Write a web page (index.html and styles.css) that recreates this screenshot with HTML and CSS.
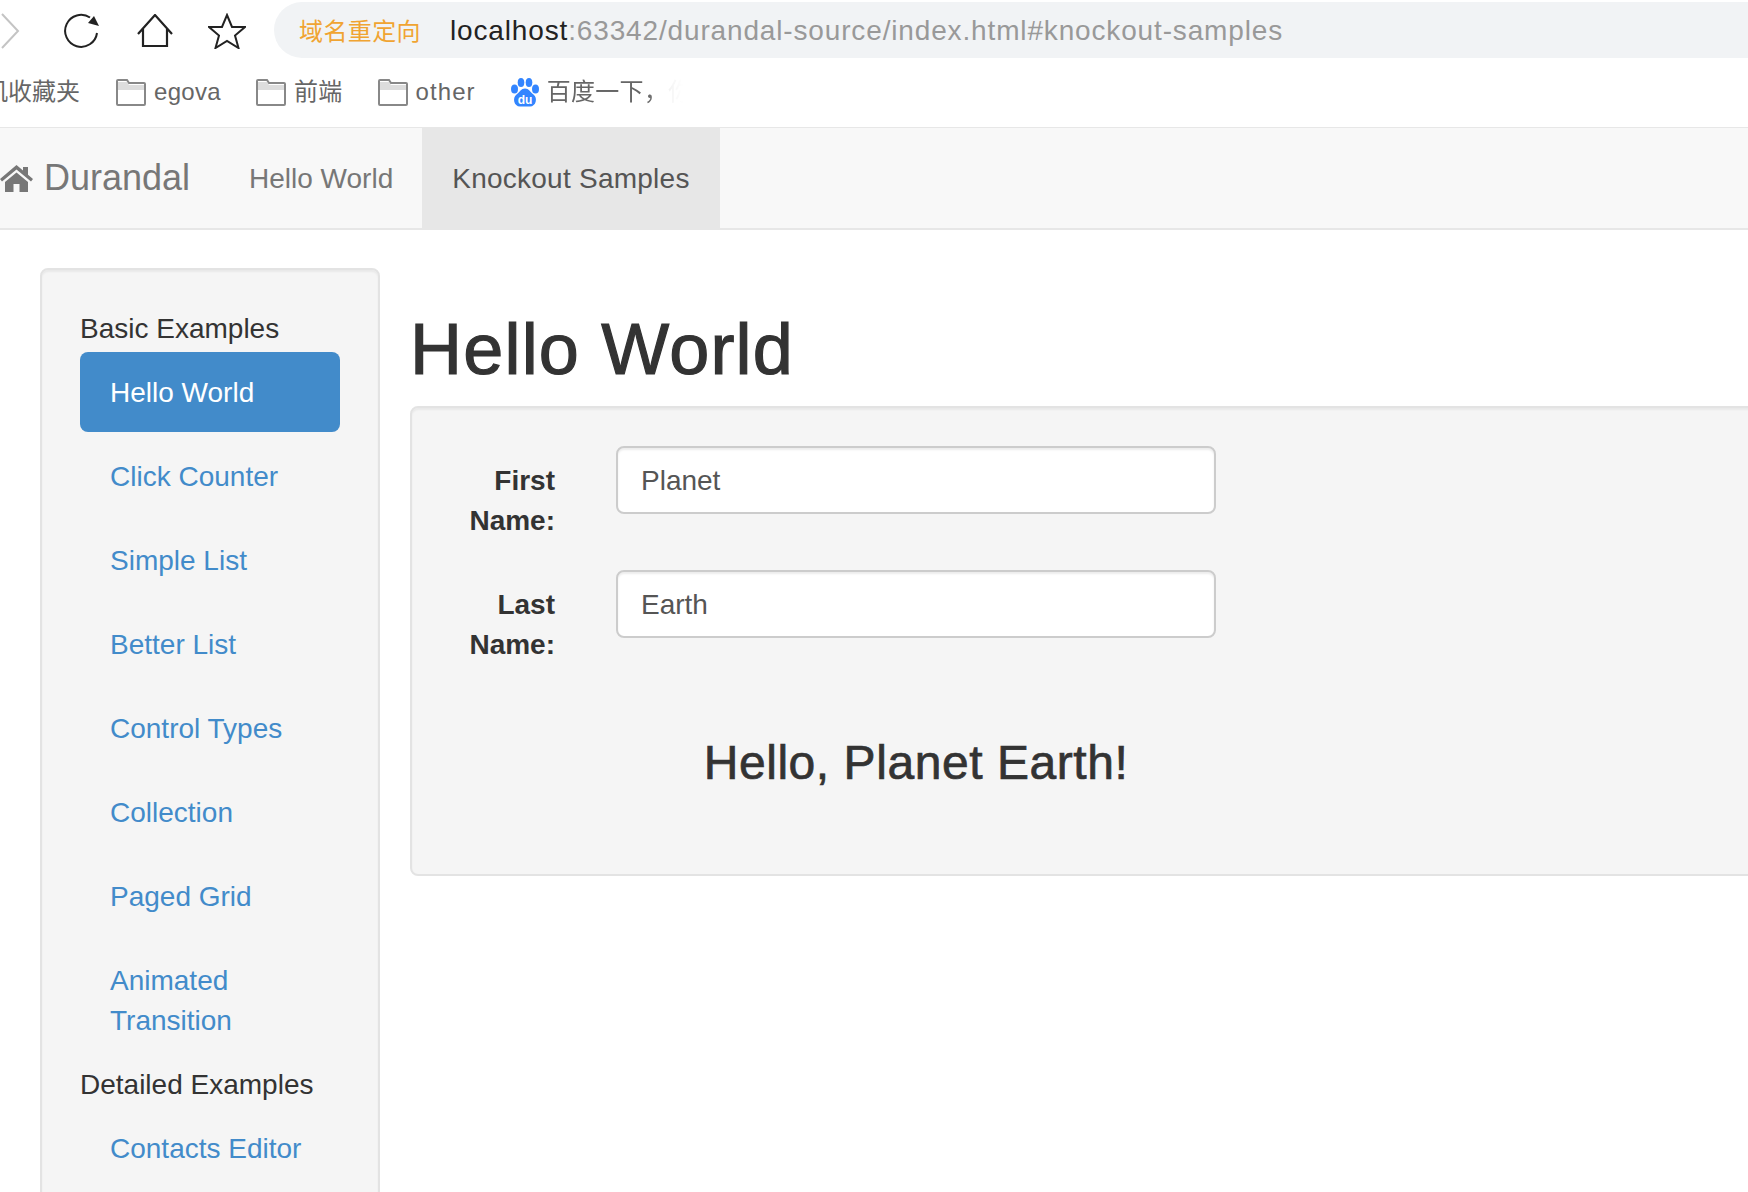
FILE: index.html
```html
<!DOCTYPE html>
<html lang="en-US">

<head>
    <title>Durandal</title>
    <meta charset="utf-8">
    <link rel="stylesheet" href="styles.css">
</head>

<body>
    <div class="toolbar">
        <div class="toolbar-icons">
            <svg class="icon-forward" width="20" height="36" viewBox="0 0 20 36"><path d="M2 1l16 17L2 35" fill="none" stroke="#c4c4c4" stroke-width="2"/></svg>
            <svg class="icon-reload" width="38" height="38" viewBox="0 0 38 38"><path d="M28 5.500A16 16 0 1 0 35 21" fill="none" stroke="#222" stroke-width="2"/><path d="M32 4l5 10-11-3z" fill="#222"/></svg>
            <svg class="icon-home" width="36" height="34" viewBox="0 0 36 34"><path d="M1 20L18 1l17 19M6 15v17h24V15" fill="none" stroke="#222" stroke-width="2.200"/></svg>
            <svg class="icon-star" width="38" height="36" viewBox="0 0 38 36"><path d="M19 2l5 12h13l-10 8.500 3.500 12.500L19 28 7.500 35 11 22.500 1 14h13z" fill="none" stroke="#222" stroke-width="2"/></svg>
        </div>
        <div class="urlbar">
            <span class="url-tag">域名重定向</span>
            <span class="url-host">localhost</span><span class="url-rest">:63342/durandal-source/index.html#knockout-samples</span>
        </div>
    </div>
    <div class="bookmarks">
        <span class="bookmark bookmark-first">机收藏夹</span>
        <span class="bookmark">
            <svg width="30" height="27" viewBox="0 0 30 27"><path d="M2 3h9l2 3h15v5H2z" fill="#ddd"/><path d="M1 25V2a1 1 0 0 1 1-1h9l2 3h15a1 1 0 0 1 1 1v20a1 1 0 0 1-1 1H2a1 1 0 0 1-1-1z" fill="none" stroke="#888" stroke-width="2"/></svg>
            egova
        </span>
        <span class="bookmark">
            <svg width="30" height="27" viewBox="0 0 30 27"><path d="M2 3h9l2 3h15v5H2z" fill="#ddd"/><path d="M1 25V2a1 1 0 0 1 1-1h9l2 3h15a1 1 0 0 1 1 1v20a1 1 0 0 1-1 1H2a1 1 0 0 1-1-1z" fill="none" stroke="#888" stroke-width="2"/></svg>
            前端
        </span>
        <span class="bookmark bookmark-wide">
            <svg width="30" height="27" viewBox="0 0 30 27"><path d="M2 3h9l2 3h15v5H2z" fill="#ddd"/><path d="M1 25V2a1 1 0 0 1 1-1h9l2 3h15a1 1 0 0 1 1 1v20a1 1 0 0 1-1 1H2a1 1 0 0 1-1-1z" fill="none" stroke="#888" stroke-width="2"/></svg>
            other
        </span>
        <span class="bookmark">
            <svg width="28" height="29" viewBox="0 0 28 29"><g fill="#3385ff"><ellipse cx="3.500" cy="11" rx="3.500" ry="4.500"/><ellipse cx="10" cy="4.500" rx="3.300" ry="4.500"/><ellipse cx="18" cy="4.500" rx="3.300" ry="4.500"/><ellipse cx="24.500" cy="11" rx="3.500" ry="4.500"/><path d="M14 10.500c4 0 5 3.500 8.500 6 4.500 3.500 2.500 12-3.500 12H9c-6 0-8-8.500-3.500-12 3.500-2.500 4.500-6 8.500-6z"/></g><text x="14" y="26" class="du">du</text></svg>
            <span class="bookmark-fade">百度一下，你好</span>
        </span>
    </div>

    <nav class="navbar">
        <a class="brand">
            <svg width="33" height="27" viewBox="0 0 33 27"><path d="M16.500 0L0 14l2 2.500L16.500 4.500 31 16.500l2-2.500-5-4.200V2h-5v3.600zM5 17v10h8.500v-8h6v8H28V17L16.500 7.500z" fill="#777"/></svg>
            Durandal
        </a>
        <a class="nav-link">Hello World</a>
        <a class="nav-link nav-active">Knockout Samples</a>
    </nav>

    <div class="page">
        <div class="sidebar">
            <div class="side-head">Basic Examples</div>
            <a class="pill pill-active">Hello World</a>
            <a class="pill">Click Counter</a>
            <a class="pill">Simple List</a>
            <a class="pill">Better List</a>
            <a class="pill">Control Types</a>
            <a class="pill">Collection</a>
            <a class="pill">Paged Grid</a>
            <a class="pill">Animated Transition</a>
            <div class="side-head side-head-next">Detailed Examples</div>
            <a class="pill">Contacts Editor</a>
        </div>
        <div class="content">
            <h1>Hello World</h1>
            <div class="well">
                <div class="form-grid">
                    <label for="first">First Name:</label>
                    <input id="first" type="text" value="Planet">
                    <label for="last">Last Name:</label>
                    <input id="last" type="text" value="Earth">
                    <h2>Hello, Planet Earth!</h2>
                </div>
            </div>
        </div>
    </div>
</body>

</html>
```

FILE: styles.css
```css
html,
body {
    height: 100%;
    margin: 0;
    overflow: hidden;
    background: #fff;
}

body {
    font-family: "Liberation Sans", "Noto Sans CJK SC", sans-serif;
    font-size: 28px;
    line-height: 40px;
    color: #333;
}

svg {
    display: block;
    flex: none;
}

/* browser chrome */
.toolbar {
    display: flex;
    height: 62px;
    padding-top: 2px;
    box-sizing: border-box;
}

.toolbar-icons {
    display: flex;
    align-items: center;
    width: 274px;
    flex: none;
    padding-bottom: 2px;
    box-sizing: border-box;
}

.icon-reload {
    margin-left: 42px;
}

.icon-home {
    margin-left: 37px;
}

.icon-star {
    margin-left: 35px;
}

.urlbar {
    flex: 1;
    height: 56px;
    display: flex;
    align-items: center;
    padding: 2px 0 0 25px;
    box-sizing: border-box;
    background: #f1f3f5;
    border-radius: 28px 0 0 28px;
    white-space: nowrap;
    letter-spacing: 0.85px;
}

.url-tag {
    padding-top: 2px;
    margin-right: 29px;
    font-size: 24px;
    letter-spacing: 0.4px;
    color: #f0a432;
}

.url-host {
    color: #222;
}

.url-rest {
    color: #999;
}

.bookmarks {
    display: flex;
    align-items: center;
    height: 65px;
    padding-bottom: 5px;
    box-sizing: border-box;
    color: #666;
    font-size: 24px;
    letter-spacing: 0.3px;
    white-space: nowrap;
}

.bookmark {
    display: flex;
    align-items: center;
    gap: 8px;
    margin-left: 35px;
}

.bookmark-first {
    margin: 0 1px 0 -16px;
    letter-spacing: 0;
}

.bookmark-wide {
    letter-spacing: 1.1px;
}

.bookmark-fade {
    width: 136px;
    overflow: hidden;
    -webkit-mask-image: linear-gradient(to right, #000 75%, rgba(0, 0, 0, 0.08) 90%, transparent);
    mask-image: linear-gradient(to right, #000 75%, rgba(0, 0, 0, 0.08) 90%, transparent);
}

.du {
    font-size: 12px;
    font-weight: bold;
    letter-spacing: 0;
    fill: #fff;
    text-anchor: middle;
}

/* page navbar */
.navbar {
    display: flex;
    height: 103px;
    background: #f8f8f8;
    border-top: 1px solid #e7e7e7;
    border-bottom: 2px solid #e7e7e7;
    box-sizing: border-box;
}

.brand {
    display: flex;
    align-items: center;
    gap: 11px;
    width: 219px;
    box-sizing: border-box;
    font-size: 36px;
    color: #777;
}

.nav-link {
    padding: 31px 29px 29px 30px;
    color: #777;
}

.nav-active {
    width: 298px;
    box-sizing: border-box;
    letter-spacing: 0.25px;
    color: #555;
    background: #e7e7e7;
}

/* sidebar and content */
.page {
    display: grid;
    grid-template-columns: 340px 1400px;
    gap: 30px;
    padding: 38px 0 0 40px;
}

.sidebar {
    background: #f5f5f5;
    border: 2px solid #e3e3e3;
    border-radius: 8px;
    box-shadow: inset 0 2px 2px rgba(0, 0, 0, 0.05);
    padding: 39px 38px 38px;
    min-height: 1000px;
    box-sizing: border-box;
}

.side-head {
    margin-bottom: 3px;
}

.side-head-next {
    margin-top: 5px;
}

.pill {
    display: block;
    padding: 21px 30px 19px;
    margin-bottom: 4px;
    border-radius: 8px;
    color: #428bca;
}

.pill-active {
    color: #fff;
    background: #428bca;
}

h1 {
    margin: 41px 0 17px;
    font-size: 72px;
    font-weight: 500;
    line-height: 80px;
    letter-spacing: 1.2px;
    -webkit-text-stroke: 1.2px #333;
}

.well {
    background: #f5f5f5;
    border: 2px solid #e3e3e3;
    border-radius: 8px;
    box-shadow: inset 0 2px 2px rgba(0, 0, 0, 0.05);
    padding: 38px;
    height: 470px;
    box-sizing: border-box;
}

.form-grid {
    display: grid;
    grid-template-columns: 105px 600px;
    column-gap: 61px;
    row-gap: 29px;
    align-items: start;
}

label {
    font-weight: bold;
    text-align: right;
    padding-top: 15px;
}

input {
    width: 100%;
    height: 68px;
    box-sizing: border-box;
    padding: 2px 24px 0 23px;
    border: 2px solid #ccc;
    border-radius: 8px;
    box-shadow: inset 0 2px 2px rgba(0, 0, 0, 0.075);
    font: inherit;
    color: #555;
    background: #fff;
}

h2 {
    grid-column: 2;
    margin: 42px 0 0;
    text-align: center;
    font-size: 48px;
    font-weight: 500;
    line-height: 53px;
    letter-spacing: 0.55px;
    -webkit-text-stroke: 0.7px #333;
}
```
